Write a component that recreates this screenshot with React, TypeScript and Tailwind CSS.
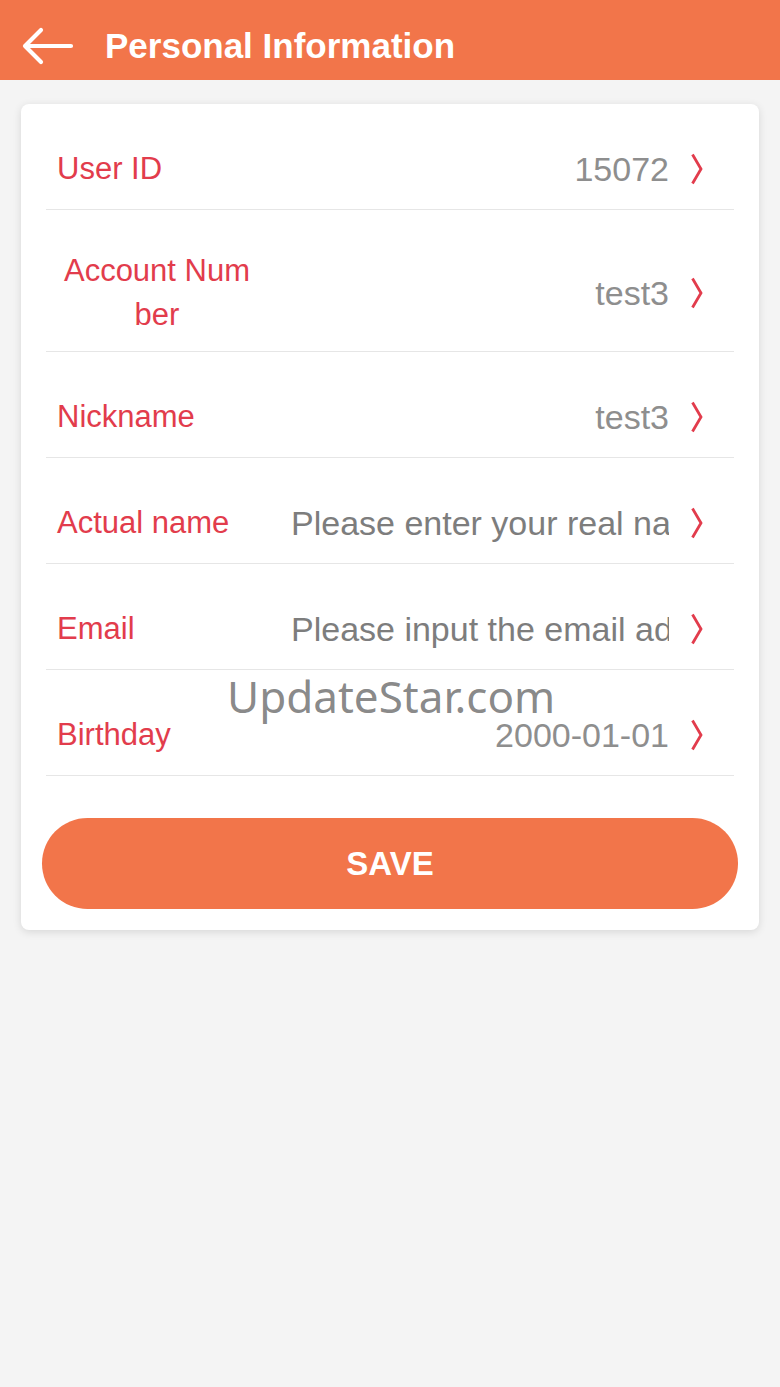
import React from 'react'

type Row = { label: string; value: string; placeholder?: boolean }

const rows: Row[] = [
  { label: 'User ID', value: '15072' },
  { label: 'Account Number', value: 'test3' },
  { label: 'Nickname', value: 'test3' },
  { label: 'Actual name', value: 'Please enter your real name', placeholder: true },
  { label: 'Email', value: 'Please input the email address', placeholder: true },
  { label: 'Birthday', value: '2000-01-01' },
]

const Chevron = () => (
  <svg width="12" height="32" viewBox="0 0 12 32" className="shrink-0">
    <polyline points="1.5,1.5 10,16 1.5,30.5" fill="none" stroke="#e23c4c" strokeWidth="2.8" strokeLinejoin="miter" />
  </svg>
)

const BackArrow = () => (
  <svg width="54" height="40" viewBox="0 0 54 40">
    <path d="M51 20H5M21 4L5 20l16 16" fill="none" stroke="#fff" strokeWidth="4.2" strokeLinecap="round" strokeLinejoin="round" />
  </svg>
)

export default function App() {
  return (
    <div
      className="relative min-h-[1387px] w-full bg-[#f4f4f4]"
      style={{ fontFamily: '"Liberation Sans", Arial, sans-serif' }}
    >
      {/* Header */}
      <div className="flex h-[80px] items-center bg-[#f2754a] pl-[20px] pt-[11px]">
        <BackArrow />
        <h1 className="ml-[31px] text-[35px] font-bold leading-none text-white">Personal Information</h1>
      </div>

      {/* Card */}
      <div className="mx-[21px] mt-[24px] rounded-[8px] bg-white px-[25px] pb-[21px] shadow-[0_2px_8px_rgba(0,0,0,0.12)]">
        {rows.map((r) => (
          <div key={r.label} className="border-b border-[#e6e6e6] pt-[25px]">
            <div className="flex min-h-[80px] items-center py-[14px] pl-[11px] pr-[31px]">
              <div className="max-w-[200px] break-all text-center text-[31px] leading-[44px] text-[#e23c4c]">
                {r.label}
              </div>
              <div
                className={
                  'ml-auto w-[378px] overflow-hidden whitespace-nowrap text-[34px] leading-[44px] ' +
                  (r.placeholder ? 'text-left text-[#7d7d7d]' : 'text-right text-[#8e8e8e]')
                }
              >
                {r.value}
              </div>
              <div className="ml-[22px] flex items-center">
                <Chevron />
              </div>
            </div>
          </div>
        ))}

        <button className="mt-[42px] flex h-[91px] w-[696px] -ml-[4px] items-center justify-center rounded-full bg-[#f2754a] text-[33px] font-bold text-white">
          SAVE
        </button>
      </div>

      {/* Watermark */}
      <div
        className="pointer-events-none absolute left-[227px] top-[674px] text-[44px] leading-none text-[#7a7a7a]/90"
        style={{ fontFamily: '"Noto Sans", "Open Sans", sans-serif' }}
      >
        UpdateStar.com
      </div>
    </div>
  )
}
